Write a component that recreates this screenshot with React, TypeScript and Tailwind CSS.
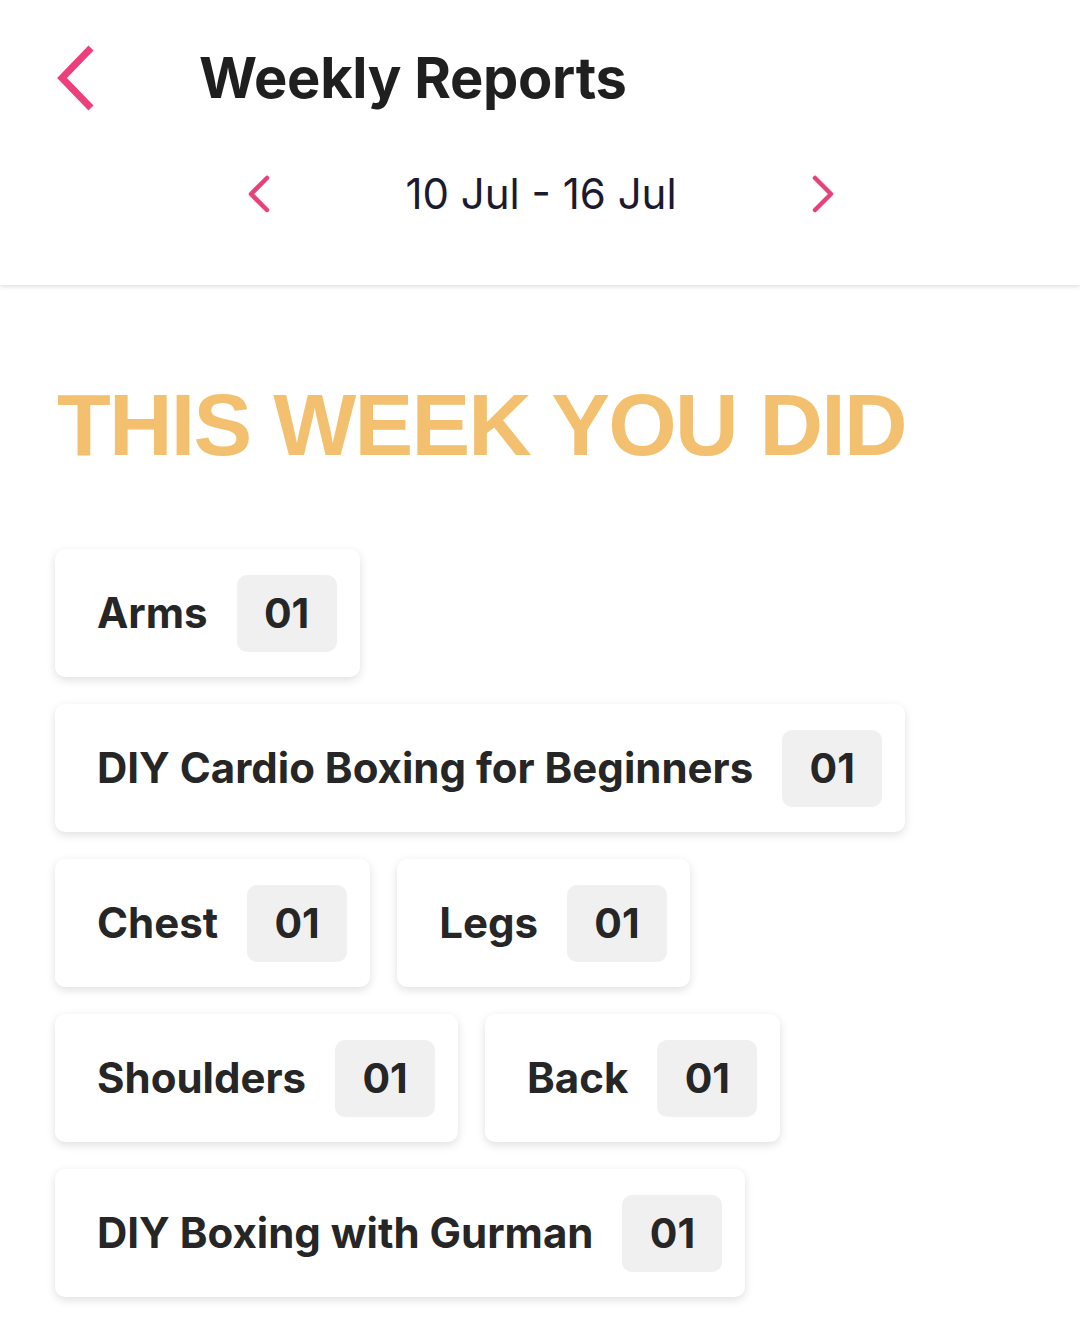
import React from "react";

const items = [
  { name: "Arms", count: "01" },
  { name: "DIY Cardio Boxing for Beginners", count: "01" },
  { name: "Chest", count: "01" },
  { name: "Legs", count: "01" },
  { name: "Shoulders", count: "01" },
  { name: "Back", count: "01" },
  { name: "DIY Boxing with Gurman", count: "01" },
];

const Chevron = ({ dir, className }: { dir: "left" | "right"; className?: string }) => (
  <svg viewBox="0 0 24 38" className={className} fill="none">
    {dir === "left" ? (
      <polyline points="21,3 5,19 21,35" stroke="#e8407a" strokeWidth="4.5" strokeLinecap="round" strokeLinejoin="round" />
    ) : (
      <polyline points="3,3 19,19 3,35" stroke="#e8407a" strokeWidth="4.5" strokeLinecap="round" strokeLinejoin="round" />
    )}
  </svg>
);

export default function App() {
  return (
    <div className="min-h-[1322px] w-[1080px] bg-white" style={{ fontFamily: "Inter, 'Noto Sans', sans-serif" }}>
      <header className="bg-white shadow-[0_2px_4px_rgba(0,0,0,0.12)] h-[285px]">
        <div className="flex items-center h-[155px] pl-[55px]">
          <svg viewBox="0 0 40 66" className="w-[40px] h-[66px]" fill="none">
            <polyline points="36,3 7,33 36,63" stroke="#ec3f7c" strokeWidth="7" strokeLinejoin="miter" />
          </svg>
          <h1 className="ml-[104px] text-[56px] font-bold text-[#1f1f1f] tracking-[-0.3px] leading-none">
            Weekly Reports
          </h1>
        </div>
        <div className="flex items-center justify-center gap-[135px] mt-[18px] pl-[2px]">
          <Chevron dir="left" className="w-[24px] h-[38px]" />
          <span className="text-[42px] text-[#1d1a30] leading-none">10 Jul - 16 Jul</span>
          <Chevron dir="right" className="w-[24px] h-[38px]" />
        </div>
      </header>

      <main className="px-[55px]">
        <h2
          className="pt-[96px] pl-[2px] text-[88px] font-bold text-[#f2c06e] leading-none tracking-[-1.75px]"
          style={{ fontFamily: "'Liberation Sans', Arial, sans-serif" }}
        >
          THIS WEEK YOU DID
        </h2>
        <div className="mt-[80px] flex flex-wrap gap-[27px] w-[970px]">
          {items.map((it) => (
            <div
              key={it.name}
              className="flex items-center h-[128px] pl-[42px] pr-[23px] bg-white rounded-[10px] shadow-[0_3px_10px_rgba(0,0,0,0.13)]"
            >
              <span className="text-[42px] font-bold text-[#262626] leading-none">{it.name}</span>
              <span className="ml-[29px] flex items-center justify-center w-[100px] h-[77px] rounded-[10px] bg-[#f0f0f0] text-[41px] font-bold text-[#262626] leading-none">
                {it.count}
              </span>
            </div>
          ))}
        </div>
      </main>
    </div>
  );
}
